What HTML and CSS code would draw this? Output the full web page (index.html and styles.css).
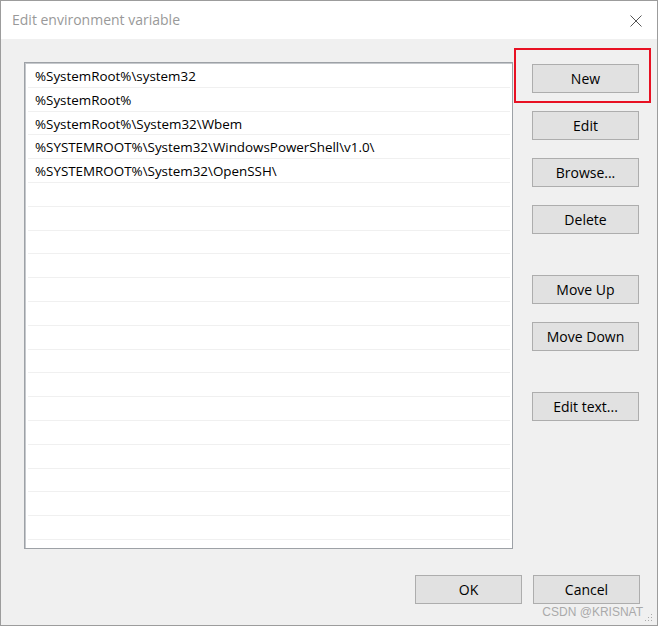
FILE: index.html
```html
<!DOCTYPE html>
<html lang="en">
<head>
  <meta charset="UTF-8">
  <title>Edit environment variable</title>
  <link rel="stylesheet" href="styles.css">
</head>
<body>
  <div class="window">
    <div class="titlebar">
      <span class="title">Edit environment variable</span>
      <svg class="close" width="12" height="12" viewBox="0 0 12 12">
        <path d="M0.5 0.5 L11.5 11.5 M11.5 0.5 L0.5 11.5" stroke="#555" stroke-width="1" fill="none"/>
      </svg>
    </div>
    <div class="main">
      <div class="list">
        <div class="row">%SystemRoot%\system32</div>
        <div class="row">%SystemRoot%</div>
        <div class="row">%SystemRoot%\System32\Wbem</div>
        <div class="row">%SYSTEMROOT%\System32\WindowsPowerShell\v1.0\</div>
        <div class="row">%SYSTEMROOT%\System32\OpenSSH\</div>
        <div class="row"></div><div class="row"></div><div class="row"></div>
        <div class="row"></div><div class="row"></div><div class="row"></div>
        <div class="row"></div><div class="row"></div><div class="row"></div>
        <div class="row"></div><div class="row"></div><div class="row"></div>
        <div class="row"></div><div class="row"></div><div class="row last"></div>
      </div>
      <div class="side">
        <button class="btn">New</button>
        <div class="highlight"></div>
        <button class="btn">Edit</button>
        <button class="btn">Browse...</button>
        <button class="btn">Delete</button>
        <button class="btn spaced">Move Up</button>
        <button class="btn">Move Down</button>
        <button class="btn spaced">Edit text...</button>
      </div>
    </div>
    <div class="footer">
      <button class="btn">OK</button>
      <button class="btn">Cancel</button>
    </div>
    <div class="watermark">CSDN @KRISNAT</div>
    <svg class="grip" width="8" height="8" viewBox="0 0 8 8">
      <rect x="6" y="0" width="1" height="1" fill="#aaa"/>
      <rect x="3" y="3" width="1" height="1" fill="#aaa"/>
      <rect x="6" y="3" width="1" height="1" fill="#aaa"/>
      <rect x="0" y="6" width="1" height="1" fill="#aaa"/>
      <rect x="3" y="6" width="1" height="1" fill="#aaa"/>
      <rect x="6" y="6" width="1" height="1" fill="#aaa"/>
    </svg>
  </div>
</body>
</html>
```

FILE: styles.css
```css
body {
  margin: 0;
  background: #fff;
  font-family: 'Open Sans', 'Noto Sans', Arial, sans-serif;
}
.window {
  position: relative;
  box-sizing: border-box;
  width: 658px;
  height: 626px;
  border: 1px solid #9c9c9c;
  background: #f0f0f0;
  display: flex;
  flex-direction: column;
}
.titlebar {
  height: 38px;
  background: #fff;
  display: flex;
  align-items: center;
  justify-content: space-between;
  padding: 0 15px 0 11px;
}
.title {
  font-size: 14px;
  color: #999;
  margin-top: -1px;
}
.close {
  margin-top: 1px;
}
.main {
  display: flex;
  padding: 23px 18px 0 23px;
}
.list {
  box-sizing: border-box;
  width: 489px;
  height: 487px;
  background: #fff;
  border: 1px solid #9da1a6;
  box-shadow: inset 1px 1px 0 #c5c8cc;
  padding: 1px 2px 0 3px;
  overflow: hidden;
}
.row {
  box-sizing: border-box;
  height: 23.8px;
  line-height: 24px;
  border-bottom: 1px solid #f0f0f0;
  padding-left: 7px;
  font-size: 13.4px;
  color: #000;
  white-space: nowrap;
}
.side {
  position: relative;
  display: flex;
  flex-direction: column;
  gap: 18px;
  margin-left: 19px;
  padding-top: 2px;
}
.btn {
  box-sizing: border-box;
  width: 107px;
  height: 29px;
  background: #e1e1e1;
  border: 1px solid #adadad;
  border-radius: 0;
  font-family: inherit;
  font-size: 14px;
  color: #000;
  padding: 0;
}
.side .spaced {
  margin-top: 23px;
}
.highlight {
  position: absolute;
  left: -18px;
  top: -14px;
  width: 137px;
  height: 55px;
  box-sizing: border-box;
  border: 2px solid #e81123;
}
.footer {
  display: flex;
  justify-content: flex-end;
  gap: 11px;
  padding: 26px 17px 0 0;
}
.watermark {
  position: absolute;
  right: 14px;
  bottom: 6px;
  font-family: 'Liberation Sans', Arial, sans-serif;
  font-size: 12px;
  color: #aaa;
}
.grip {
  position: absolute;
  right: 4px;
  bottom: 3px;
}
```
